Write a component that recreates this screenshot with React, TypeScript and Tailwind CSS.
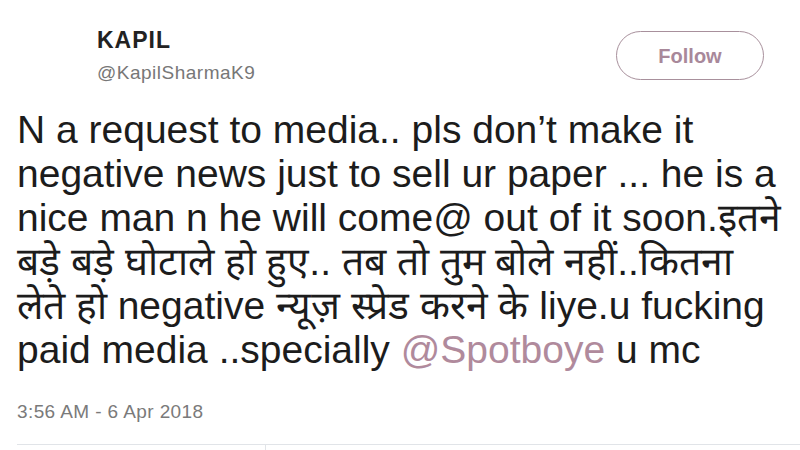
export default function App() {
	return (
		<div className="h-[450px] w-[800px] overflow-hidden bg-white font-['Liberation_Sans',Arial,sans-serif] text-[#1c1c1c]">
			<div className="flex items-start pl-[97px] pr-[36px] pt-[26px]">
				<div className="flex-1">
					<div className="text-[23px] font-bold leading-[28px] tracking-[1px] text-[#222]">
						KAPIL
					</div>
					<div className="mt-[8px] text-[19px] leading-[22px] tracking-[0.5px] text-[#777]">
						@KapilSharmaK9
					</div>
				</div>
				<button className="mt-[5px] flex h-[49px] w-[148px] items-center justify-center rounded-full border border-[#a8909c] text-[20px] font-bold text-[#a8889a]">
					Follow
				</button>
			</div>
			<p className="mt-[24px] whitespace-nowrap pl-[17px] text-[39px] leading-[44px]">
				N a request to media.. pls don’t make it
				<br />
				negative news just to sell ur paper ... he is a
				<br />
				nice man n he will come@ out of it soon.इतने
				<br />
				बड़े बड़े घोटाले हो हुए.. तब तो तुम बोले नहीं..कितना
				<br />
				लेते हो negative न्यूज़ स्प्रेड करने के liye.u fucking
				<br />
				paid media ..specially <span className="text-[#b08a9c]">@Spotboye</span>{" "}
				u mc
			</p>
			<div className="mt-[29px] pl-[17px] text-[19px] leading-[22px] tracking-[0.4px] text-[#7a7a7a]">
				3:56 AM - 6 Apr 2018
			</div>
			<div className="ml-[17px] mt-[21px] flex h-[6px] border-t border-[#e1e4e8]">
				<div className="w-[249px] border-r border-[#e1e4e8]" />
			</div>
		</div>
	);
}
